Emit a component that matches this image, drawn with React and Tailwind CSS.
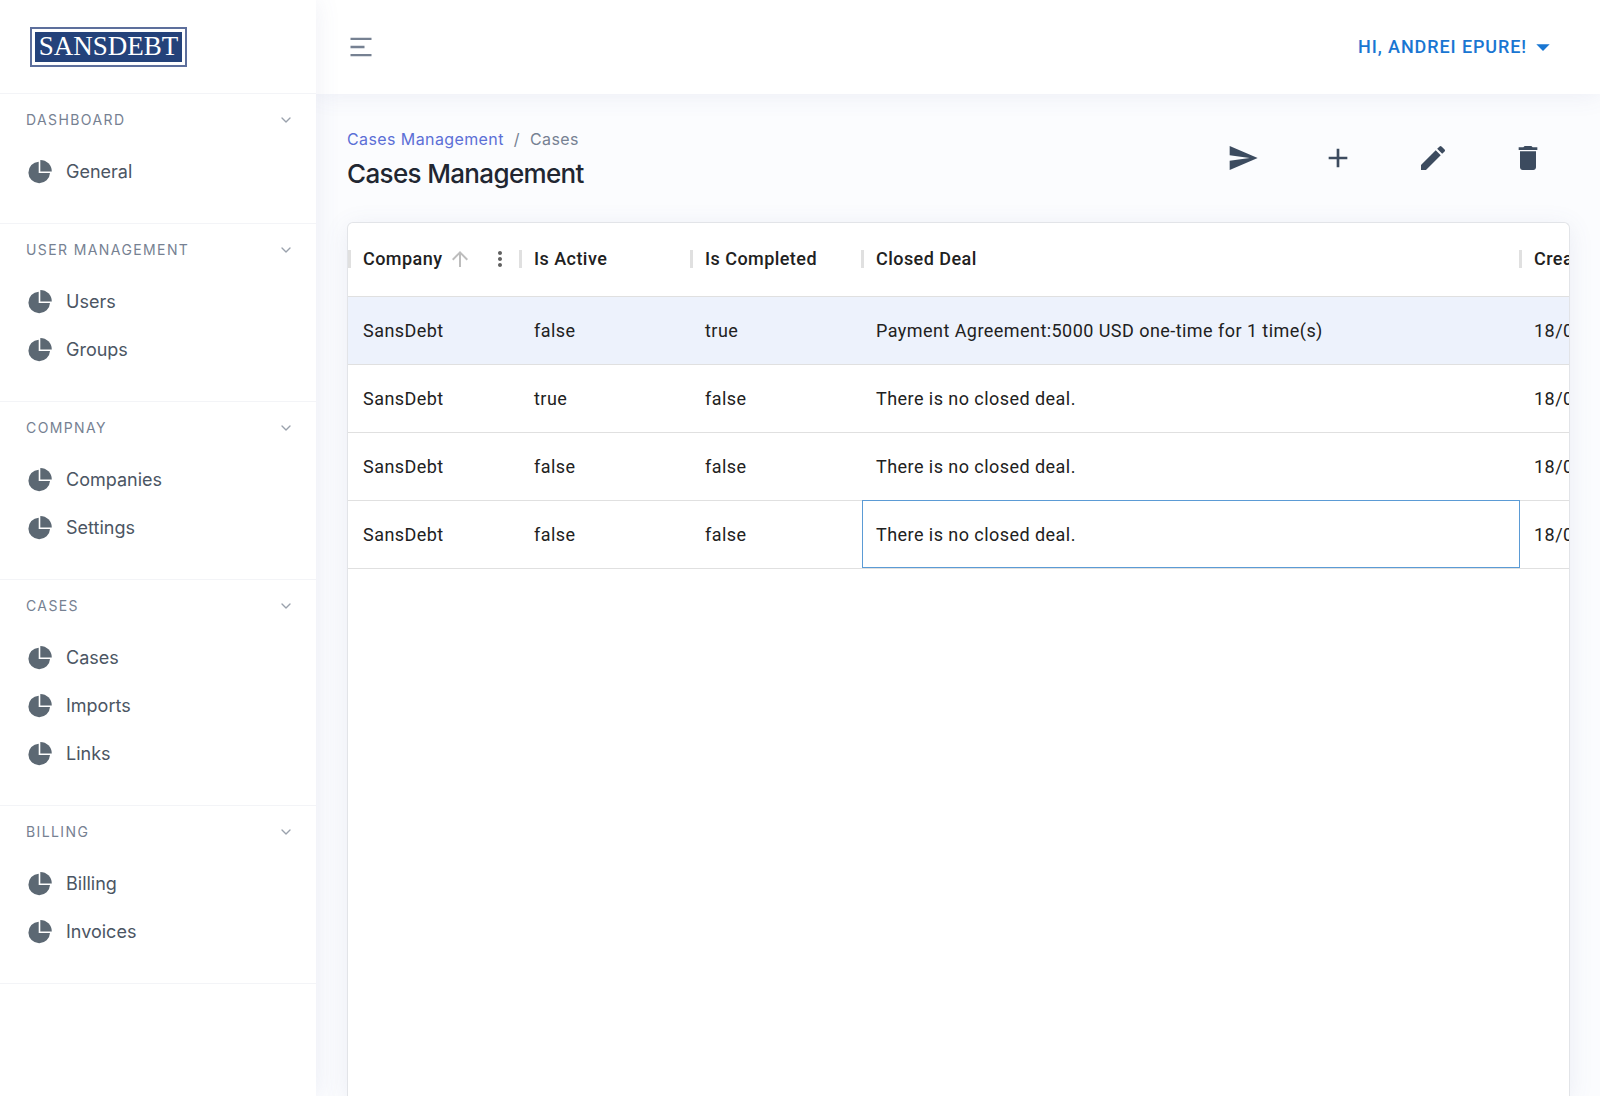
import { useState } from "react";
import { MdAdd, MdArrowDropDown, MdArrowUpward, MdDelete, MdEdit, MdMoreVert, MdSend } from "react-icons/md";
import { RiMenu2Line } from "react-icons/ri";
import { FiChevronDown } from "react-icons/fi";

const sections = [
  { title: "Dashboard", items: ["General"] },
  { title: "User Management", items: ["Users", "Groups"] },
  { title: "Compnay", items: ["Companies", "Settings"] },
  { title: "Cases", items: ["Cases", "Imports", "Links"] },
  { title: "Billing", items: ["Billing", "Invoices"] },
];

const rows = [
  { company: "SansDebt", active: "false", completed: "true", deal: "Payment Agreement:5000 USD one-time for 1 time(s)", created: "18/01/2023" },
  { company: "SansDebt", active: "true", completed: "false", deal: "There is no closed deal.", created: "18/01/2023" },
  { company: "SansDebt", active: "false", completed: "false", deal: "There is no closed deal.", created: "18/01/2023" },
  { company: "SansDebt", active: "false", completed: "false", deal: "There is no closed deal.", created: "18/01/2023" },
];

const actions = [
  { label: "Send", Icon: MdSend },
  { label: "Add", Icon: MdAdd },
  { label: "Edit", Icon: MdEdit },
  { label: "Delete", Icon: MdDelete },
];

function PieIcon() {
  return (
    <svg viewBox="0 0 24 24" className="size-6 shrink-0" fill="currentColor" aria-hidden="true">
      <path d="M10.7 1.7V13H22A10.8 10.8 0 1 1 10.7 1.7Z" />
      <path d="M12.3 0A11.5 11.5 0 0 1 23.8 11.5H12.3Z" />
    </svg>
  );
}

function Logo() {
  return (
    <a href="#" className="flex h-10 w-[157px] border-2 border-[#5d6f9c] p-[3px]">
      <span className="flex flex-1 items-center justify-center bg-[#24427a] font-['Liberation_Serif',serif] text-[27px] leading-none text-white">
        SANSDEBT
      </span>
    </a>
  );
}

function Sidebar() {
  return (
    <aside className="z-10 w-[316px] shrink-0 bg-white shadow-[0_0_24px_rgba(90,97,160,0.10)]">
      <div className="flex h-[94px] items-center border-b border-[#f3f4f7] px-[30px]">
        <Logo />
      </div>
      <nav>
        {sections.map((section) => (
          <section key={section.title} className="border-b border-[#f3f4f7] pb-[27px]">
            <button className="flex h-[52px] w-full items-center justify-between pr-[22px] pl-[26px] text-[#768192]">
              <span className="text-sm tracking-widest uppercase">{section.title}</span>
              <FiChevronDown className="size-4 text-[#9aa1ac]" />
            </button>
            <ul className="pt-0.5">
              {section.items.map((item) => (
                <li key={item}>
                  <a href="#" className="flex h-12 items-center gap-3.5 px-7 text-lg text-[#4b5563]">
                    <span className="text-[#5c6873]">
                      <PieIcon />
                    </span>
                    {item}
                  </a>
                </li>
              ))}
            </ul>
          </section>
        ))}
      </nav>
    </aside>
  );
}

function Topbar() {
  return (
    <header className="flex h-[94px] shrink-0 items-center justify-between bg-white pr-[41px] pl-[31px] shadow-[0_0_24px_rgba(90,97,160,0.10)]">
      <button aria-label="Toggle sidebar" className="text-[#768192]">
        <RiMenu2Line className="size-7" />
      </button>
      <button className="flex items-center font-['Roboto',sans-serif] text-lg font-medium tracking-wider text-[#1976d2] uppercase">
        Hi, Andrei Epure!
        <MdArrowDropDown className="size-8" />
      </button>
    </header>
  );
}

function Separator({ className }) {
  return <span className={`h-[18px] w-[3px] shrink-0 bg-[#e0e0e0] ${className}`} />;
}

function HeadCell({ children, width }) {
  return (
    <th className={`${width} p-0 font-medium`}>
      <div className="flex items-center pl-3.5">
        {children}
        <Separator className="-mr-0.5 ml-auto" />
      </div>
    </th>
  );
}

function CasesTable() {
  const [selected, setSelected] = useState(0);

  return (
    <div className="flex-1 overflow-hidden rounded-t-md border border-b-0 border-[#e2e4e8] bg-white shadow-[0_4px_24px_rgba(90,97,160,0.10)]">
      <table className="w-[1372px] table-fixed border-collapse font-['Roboto',sans-serif] text-lg tracking-wide text-[#212121]">
        <thead>
          <tr className="h-[73px] border-b border-[#e0e0e0]">
            <th className="w-[172px] p-0 font-medium">
              <div className="flex items-center">
                <Separator className="mr-3" />
                Company
                <MdArrowUpward className="ml-1.5 size-6 shrink-0 text-[#bdbdbd]" />
                <button aria-label="Column menu" className="ml-4 text-[#616161]">
                  <MdMoreVert className="size-6" />
                </button>
                <Separator className="-mr-0.5 ml-auto" />
              </div>
            </th>
            <HeadCell width="w-[171px]">Is Active</HeadCell>
            <HeadCell width="w-[171px]">Is Completed</HeadCell>
            <HeadCell width="w-[658px]">Closed Deal</HeadCell>
            <HeadCell width="w-[200px]">Created At</HeadCell>
          </tr>
        </thead>
        <tbody>
          {rows.map((row, index) => (
            <tr
              key={index}
              onClick={() => setSelected(index)}
              className={`h-[68px] border-b border-[#e0e0e0] ${selected === index ? "bg-[#edf2fc]" : ""}`}
            >
              <td className="pt-0.5 pl-[15px]">{row.company}</td>
              <td className="pt-0.5 pl-3.5">{row.active}</td>
              <td className="pt-0.5 pl-3.5">{row.completed}</td>
              <td className={`pt-0.5 pl-3.5 ${index === 3 ? "outline outline-1 -outline-offset-1 outline-[#5b9bd5]" : ""}`}>{row.deal}</td>
              <td className="pt-0.5 pl-3.5">{row.created}</td>
            </tr>
          ))}
        </tbody>
      </table>
    </div>
  );
}

export default function App() {
  return (
    <div className="flex min-h-screen bg-[#fbfcfe] font-['Inter',sans-serif]">
      <Sidebar />
      <div className="flex min-w-0 flex-1 flex-col">
        <Topbar />
        <main className="flex flex-1 flex-col pt-[30px] pr-[30px] pl-[31px]">
          <div className="mb-7 flex justify-between">
            <div>
              <nav aria-label="Breadcrumb" className="flex gap-2.5 text-base leading-[30px] tracking-wide text-[#768192]">
                <a href="#" className="text-[#5b6fd6]">Cases Management</a>
                <span>/</span>
                <span>Cases</span>
              </nav>
              <h1 className="text-[26px] leading-10 font-medium tracking-tight text-[#212631]">Cases Management</h1>
            </div>
            <div className="flex h-[68px] items-center gap-[63px] pr-[26px] text-[#3c4b5f]">
              {actions.map(({ label, Icon }) => (
                <button key={label} aria-label={label}>
                  <Icon className="size-8" />
                </button>
              ))}
            </div>
          </div>
          <CasesTable />
        </main>
      </div>
    </div>
  );
}
